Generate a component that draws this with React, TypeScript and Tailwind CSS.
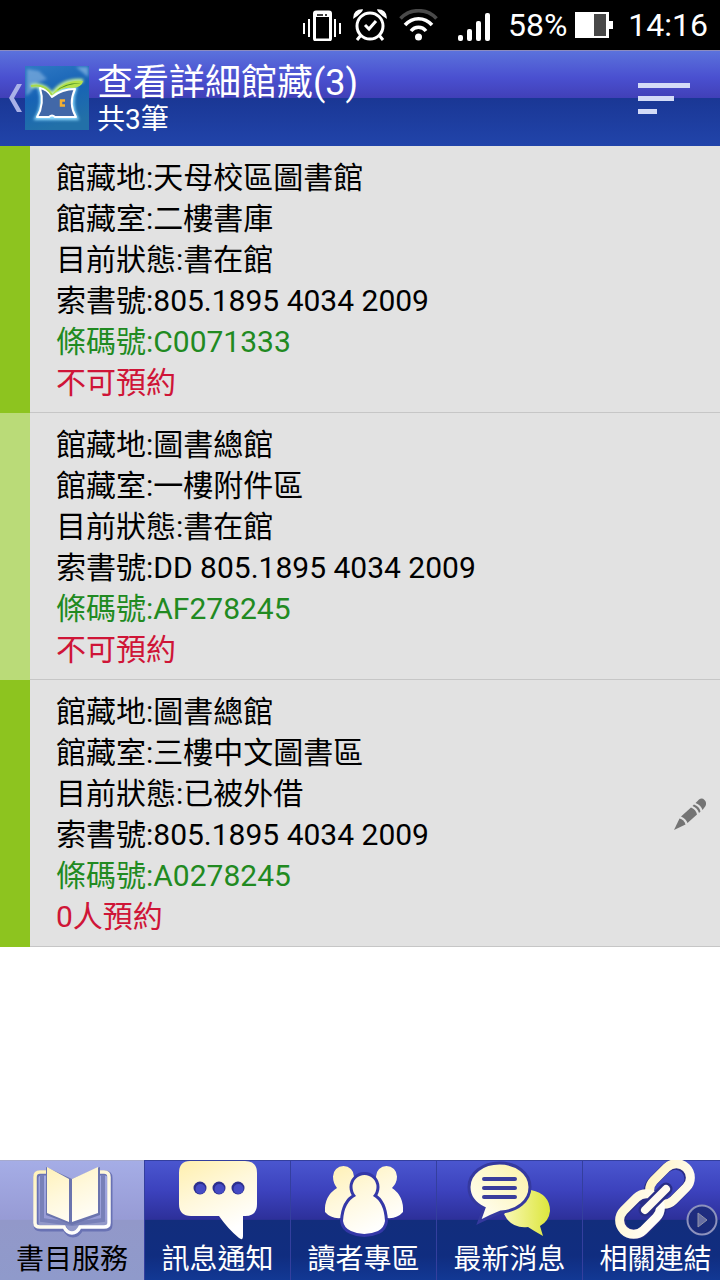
import type { ReactNode } from 'react';

type Holding = {
  location: string;
  room: string;
  status: string;
  callNumber: string;
  barcode: string;
  reservation: string;
  reservable?: boolean;
};

const holdings: Holding[] = [
  { location: '天母校區圖書館', room: '二樓書庫', status: '書在館', callNumber: '805.1895 4034 2009', barcode: 'C0071333', reservation: '不可預約' },
  { location: '圖書總館', room: '一樓附件區', status: '書在館', callNumber: 'DD 805.1895 4034 2009', barcode: 'AF278245', reservation: '不可預約' },
  { location: '圖書總館', room: '三樓中文圖書區', status: '已被外借', callNumber: '805.1895 4034 2009', barcode: 'A0278245', reservation: '0人預約', reservable: true },
];

function StatusBar() {
  return (
    <div className="flex h-[50px] shrink-0 items-center justify-end bg-black pr-3 text-[32px] leading-[50px] text-white">
      <svg className="mr-3 h-8 w-[38px]" viewBox="0 0 38 32" fill="none" stroke="#fff" aria-hidden="true">
        <path d="M1 14v11M6 10v18M32 10v18M37 14v11" strokeWidth="2" />
        <rect x="11.5" y="3" width="16" height="28" rx="1.5" strokeWidth="3" />
        <path d="M11 5.500h17" strokeWidth="5" />
        <path d="M14 6h6M22 6h2" stroke="#000" strokeWidth="1.5" />
      </svg>
      <svg className="mr-3 h-8 w-[34px]" viewBox="0 0 34 32" fill="none" stroke="#fff" aria-hidden="true">
        <circle cx="17" cy="17" r="13" strokeWidth="3" />
        <path d="M12 16l4 4 7-8" strokeWidth="3" />
        <path d="M8 26l-4 5M26 26l4 5" strokeWidth="3" />
        <path d="M1 8.5C1 4 4 1 9 1Q8.500 3 1 8.500ZM33 8.500C33 4 30 1 25 1Q25.500 3 33 8.500Z" fill="#fff" strokeWidth="1.500" />
      </svg>
      <svg className="mr-5 h-8 w-[39px]" viewBox="0 0 39 32" fill="none" strokeWidth="3.500" aria-hidden="true">
        <path d="M1.500 9.500C11 -1 28 -1 37.500 9.500" stroke="#4a4a4a" />
        <path d="M6 16C13.500 7.500 25.500 7.500 33 16M12 22C16 17 23 17 27 22" stroke="#fff" />
        <circle cx="19.500" cy="28" r="3.500" fill="#fff" />
      </svg>
      <svg className="mr-[18px] h-8 w-8" viewBox="0 0 32 32" fill="#fff" aria-hidden="true">
        <rect y="26" width="5" height="6" rx="2" />
        <rect x="9" y="20" width="5" height="12" rx="2" />
        <rect x="18" y="12" width="5" height="20" rx="2" />
        <rect x="27" y="4" width="5" height="28" rx="2" />
      </svg>
      <span>58%</span>
      <svg className="mr-[15px] ml-2 h-[26px] w-[38px]" viewBox="0 0 38 26" aria-hidden="true">
        <path d="M0 0h34v9h4v8h-4v9H0z" fill="#fff" />
        <path d="M19 2h12v22H19z" fill="#484848" />
      </svg>
      <span>14:16</span>
    </div>
  );
}

function LibraryLogo() {
  return (
    <svg className="size-16" viewBox="0 0 64 64" aria-hidden="true">
      <defs>
        <linearGradient id="sky" x1="0" y1="0" x2="0.300" y2="1">
          <stop offset="0" stopColor="#2f79c4" />
          <stop offset="0.500" stopColor="#1763b5" />
          <stop offset="1" stopColor="#2270a8" />
        </linearGradient>
        <filter id="soft" x="-30%" y="-30%" width="160%" height="160%">
          <feGaussianBlur stdDeviation="1.500" />
        </filter>
      </defs>
      <path d="M0 0h64v64H0z" fill="url(#sky)" />
      <g filter="url(#soft)">
        <path d="M2 3L14 5 22 13 12 17 6 26 1 30Z" fill="#8db9e4" opacity="0.600" />
        <path d="M51 1h12v10z" fill="#9bc7ec" opacity="0.600" />
        <path d="M15 22Q22 23 27 30Q37 21 50 22Q44 38 51 52H12Q20 38 15 22Z" fill="#8fdcff" stroke="#8fdcff" strokeWidth="4" />
        <path d="M6 20Q20 17 27 29Q38 13 58 15" fill="none" stroke="#c8f59a" strokeWidth="4" />
      </g>
      <path d="M15 22Q22 23 27 31Q37 23 50 23Q43 38 51 51H30Q27 48 24 51H12Q20 38 15 22Z" fill="#4268a8" stroke="#fff" strokeWidth="2" strokeLinejoin="round" />
      <path d="M6 20Q20 17 27 29" fill="none" stroke="#a6d84a" strokeWidth="2" />
      <path d="M27 29Q38 13 58 15Q57 21 48 22Q38 20 27 29Z" fill="#b4e24c" />
      <path d="M31 25Q41 16 56 17Q42 18 31 25Z" fill="#4f9428" />
      <path d="M40 34.500h-4v5h4" fill="none" stroke="#f5b031" strokeWidth="2.500" />
    </svg>
  );
}

function Header() {
  return (
    <header className="flex h-24 shrink-0 items-center border-t border-[#8c8cc0] bg-[linear-gradient(180deg,#5b72dc_0%,#4a50d0_28%,#4140b8_49%,#1a3795_50%,#2144aa_100%)] text-white">
      <button type="button" aria-label="返回" className="flex h-full items-center pb-px pl-2">
        <svg className="h-7 w-[17px]" viewBox="0 0 17 28" aria-hidden="true">
          <path d="M9 0h5L6 14l8 14H9L1 14Z" fill="#aab2e8" />
        </svg>
        <LibraryLogo />
      </button>
      <div className="ml-2 flex-1 pt-1">
        <h1 className="text-[36px] leading-[38px]">查看詳細館藏(3)</h1>
        <p className="text-[28px] leading-9">共3筆</p>
      </div>
      <button type="button" aria-label="排序" className="mr-[30px]">
        <svg className="h-8 w-[52px]" viewBox="0 0 52 32" fill="#d3dbf7" aria-hidden="true">
          <path d="M0 0h52v5H0zM0 13h36v5H0zM0 26h19v5H0z" />
        </svg>
      </button>
    </header>
  );
}

function HoldingRow({ item }: { item: Holding }) {
  return (
    <li className="group flex">
      <div className="w-[30px] shrink-0 bg-[#8dc41f] group-even:bg-[#badb78]" />
      <div className="flex flex-1 items-center border-b border-[#c6c6c6] bg-[#e2e2e2] pt-[11px] pr-[14px] pb-[9px] pl-[26px]">
        <div className="flex-1 text-[30px] leading-[41px] text-black">
          <p>館藏地:{item.location}</p>
          <p>館藏室:{item.room}</p>
          <p>目前狀態:{item.status}</p>
          <p>索書號:{item.callNumber}</p>
          <p className="text-[#218a21]">條碼號:{item.barcode}</p>
          <p className="text-[#cf1537]">{item.reservation}</p>
        </div>
        {item.reservable && (
          <button type="button" aria-label="預約">
            <svg className="size-8" viewBox="0 0 32 32" fill="#747474" aria-hidden="true">
              <path d="M0 32L5.500 20.500Q10 21.500 11.500 26.500Z" />
              <path d="M7 18.500L17 9.500Q22 11.500 23 16.500L13.500 25Q12 20.500 7 18.500Z" />
              <path d="M18.500 8L20 6.500Q25.500 8.500 26.500 13.500L25 15Q23.500 10 18.500 8Z" />
              <path d="M21.500 5L25 1.500Q28-0.500 30.500 2T31.500 8L28.500 12Q27 7 21.500 5Z" />
            </svg>
          </button>
        )}
      </div>
    </li>
  );
}

const bookIcon = (
  <>
    <path d="M16 12H9Q4 12 4 17V64Q4 68 9 68H33Q36 74 41 74T49 68H73Q78 68 78 64V17Q78 12 73 12H66" fill="none" stroke="#6972b4" strokeWidth="5" />
    <path d="M14 11H8Q3 11 3 16V62Q3 66 8 66H32Q35 72 40 72T48 66H72Q77 66 77 62V16Q77 11 72 11H66" fill="none" stroke="url(#cream)" strokeWidth="3.500" />
    <path d="M10 14V59L40 63 71 59V14" fill="none" stroke="#7880b8" strokeWidth="4" />
    <path d="M14 6L40 18 68 6V54L40 64 14 54Z" fill="#6b74ae" />
    <path d="M15 6L37 18V61L15 52Z" fill="url(#cream)" />
    <path d="M66 6L40 18V61L66 52Z" fill="url(#cream)" />
  </>
);

const messageIcon = (
  <>
    <path d="M12 0H67Q79 0 79 12V43Q79 55 67 55H65V75Q65 80 61 77Q50 68 41 55H13Q1 55 1 43V12Q1 0 12 0Z" fill="url(#cream)" />
    <g fill="#2c2f8e">
      <circle cx="22" cy="27" r="6.500" /><circle cx="41" cy="27" r="6.500" /><circle cx="60" cy="27" r="6.500" />
    </g>
    <g fill="#454bc4">
      <circle cx="22.500" cy="28" r="5" /><circle cx="41.500" cy="28" r="5" /><circle cx="60.500" cy="28" r="5" />
    </g>
  </>
);

const person = 'M28.500 26a12 12 0 1 1 24 0Q52.500 31 49 35Q60 41 61 60Q60 67 54 70Q40 76 27 70Q20 67 19 60Q20 41 32 35Q28.500 31 28.500 26Z';

const readersIcon = (
  <>
    <path d="M9 15.500a10.500 10.500 0 1 1 21 0Q30 19 28 22L28 50 17 57Q7 58 1 51Q0 35 13 27Q9 22 9 15.500ZM52 15.500a10.500 10.500 0 1 1 21 0Q73 22 68 27Q80 35 79 51Q73 58 63 57L52 50 54 22Q52 19 52 15.500Z" fill="url(#cream)" />
    <path d={person} fill="#3438a8" stroke="#3438a8" strokeWidth="6" />
    <path d={person} fill="url(#cream)" />
  </>
);

const newsIcon = (
  <>
    <path d="M61 29Q80 33 80 50Q79 60 70 65L73 75Q64 70 58 66Q41 68 34 53Z" fill="url(#lime)" />
    <path d="M29.500 2C46 2 60 12 60 26S47 50 31 51Q21 55 9 61L14 47Q-1 40-1 26C-1 12 13 2 29.500 2Z" fill="url(#creamSoft)" stroke="#35399f" strokeWidth="3" />
    <g stroke="#3a3d9c" strokeWidth="4" strokeLinecap="round">
      <path d="M14 18h31M14 27h31M14 36h31" />
    </g>
  </>
);

const linkIcon = (
  <g fill="none" strokeLinecap="round">
    <g stroke="#292d86" strokeWidth="10">
      <rect x="30" y="10" width="46" height="28" rx="14" transform="rotate(-45 53 24)" />
      <rect x="2" y="39" width="46" height="28" rx="14" transform="rotate(-45 25 53)" />
    </g>
    <rect x="31" y="9" width="46" height="28" rx="14" transform="rotate(-45 54 23)" stroke="url(#cream)" strokeWidth="9" />
    <path d="M23 42L33 32L47 46L37 56Z" fill="#292d86" />
    <rect x="1" y="39" width="46" height="28" rx="14" transform="rotate(-45 24 53)" stroke="url(#cream)" strokeWidth="9" />
    <path d="M29 49L50 28" stroke="#292d86" strokeWidth="13" />
    <path d="M29 49L50 28" stroke="#fffaf0" strokeWidth="8" />
  </g>
);

const tabs: { label: string; icon: ReactNode }[] = [
  { label: '書目服務', icon: bookIcon },
  { label: '訊息通知', icon: messageIcon },
  { label: '讀者專區', icon: readersIcon },
  { label: '最新消息', icon: newsIcon },
  { label: '相關連結', icon: linkIcon },
];

function TabBar() {
  return (
    <nav className="relative shrink-0 overflow-hidden bg-[#0f2b80]">
      <svg className="absolute size-0" aria-hidden="true">
        <defs>
          <linearGradient id="cream" gradientUnits="userSpaceOnUse" x1="5" y1="0" x2="40" y2="75">
            <stop offset="0" stopColor="#fff0b0" />
            <stop offset="0.500" stopColor="#fff8dc" />
            <stop offset="1" stopColor="#fff" />
          </linearGradient>
          <linearGradient id="creamSoft" x1="0" y1="1" x2="1" y2="0">
            <stop offset="0" stopColor="#fff" />
            <stop offset="1" stopColor="#fdf3a5" />
          </linearGradient>
          <linearGradient id="lime">
            <stop offset="0" stopColor="#f9f8b5" />
            <stop offset="1" stopColor="#dce63c" />
          </linearGradient>
        </defs>
      </svg>
      <div className="flex">
        {tabs.map(({ label, icon }) => (
          <button
            key={label}
            type="button"
            className="flex h-[120px] w-[146px] shrink-0 flex-col items-center border-t border-l border-[#343f9e] bg-[linear-gradient(180deg,#4a56cf_0%,#3c42bd_25%,#2d309a_49%,#122d7c_50%,#102d80_80%,#123894_100%)] text-white first:w-36 first:border-l-0 first:border-[#a6aace] first:bg-[linear-gradient(180deg,#a5ade6_0%,#979bd5_49%,#9298c9_50%,#8f9acb_100%)] first:text-black"
          >
            <svg className="h-20 w-20 shrink-0 overflow-visible" viewBox="0 0 80 80" aria-hidden="true">{icon}</svg>
            <span className="text-[28px] leading-[38px]">{label}</span>
          </button>
        ))}
      </div>
      <button type="button" aria-label="更多" className="absolute right-[2px] bottom-11 size-8">
        <svg viewBox="0 0 32 32" aria-hidden="true">
          <circle cx="16" cy="16" r="14.500" fill="#1c2c79" fillOpacity="0.850" stroke="#8d92bd" strokeWidth="2" />
          <path d="M12 9v14l9-7z" fill="#686fa2" stroke="#9093a8" />
        </svg>
      </button>
    </nav>
  );
}

export default function App() {
  return (
    <div className="flex min-h-screen flex-col bg-white font-['Roboto','Noto_Sans_CJK_TC',sans-serif]">
      <StatusBar />
      <Header />
      <main className="flex-1">
        <ul>
          {holdings.map((item) => (
            <HoldingRow key={item.barcode} item={item} />
          ))}
        </ul>
      </main>
      <TabBar />
    </div>
  );
}
